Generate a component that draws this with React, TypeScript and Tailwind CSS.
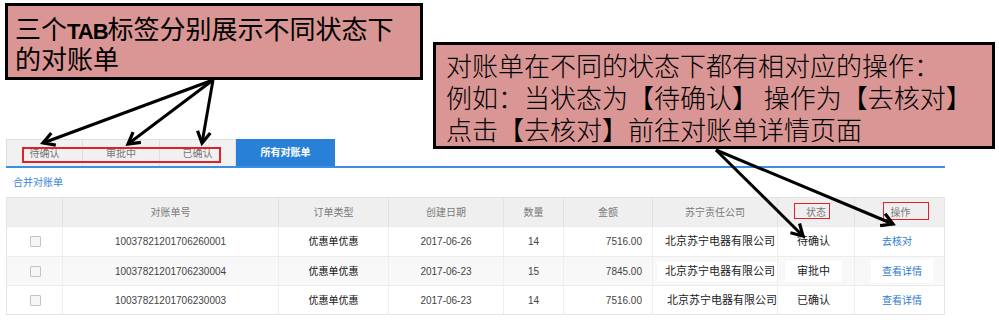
import React from "react";

const cols = "grid grid-cols-[55px_216px_110px_115px_60px_89px_125px_77px_92px]";

type Row = {
  no: string;
  date: string;
  qty: string;
  amt: string;
  status: string;
  op: string;
  shade?: boolean;
  patch?: boolean;
  companyPl: string;
};

const rows: Row[] = [
  { no: "10037821201706260001", date: "2017-06-26", qty: "14", amt: "7516.00", status: "待确认", op: "去核对", companyPl: "pl-[12px]" },
  { no: "10037821201706230004", date: "2017-06-23", qty: "15", amt: "7845.00", status: "审批中", op: "查看详情", shade: true, patch: true, companyPl: "pl-[4px]" },
  { no: "10037821201706230003", date: "2017-06-23", qty: "14", amt: "7516.00", status: "已确认", op: "查看详情", companyPl: "pl-[14px]" },
];

function Arrow({ x1, y1, x2, y2 }: { x1: number; y1: number; x2: number; y2: number }) {
  const a = Math.atan2(y2 - y1, x2 - x1);
  const L = 13;
  const w = Math.PI / 6;
  const p1 = `${x2 - L * Math.cos(a - w)},${y2 - L * Math.sin(a - w)}`;
  const p2 = `${x2 - L * Math.cos(a + w)},${y2 - L * Math.sin(a + w)}`;
  return (
    <g>
      <line x1={x1} y1={y1} x2={x2} y2={y2} stroke="#000" strokeWidth={3} />
      <polyline points={`${p1} ${x2},${y2} ${p2}`} fill="none" stroke="#000" strokeWidth={3.2} strokeLinejoin="miter" />
    </g>
  );
}

export default function App() {
  return (
    <div className="relative w-[999px] h-[324px] overflow-hidden bg-white font-[family-name:'Liberation_Sans','Noto_Sans_CJK_SC',sans-serif]">
      {/* underlying page */}
      <div className="pt-[139px] pl-[6px] w-[945px]">
        <div className="flex h-[27px]">
          <div className="w-[76px] flex items-center justify-center bg-[#f1f1f1] border-t border-l border-[#dedede] text-[10px] text-[#777]">待确认</div>
          <div className="w-[77px] flex items-center justify-center bg-[#f1f1f1] border-t border-l border-[#dedede] text-[10px] text-[#777]">审批中</div>
          <div className="w-[77px] flex items-center justify-center bg-[#f1f1f1] border-t border-l border-r border-[#dedede] text-[10px] text-[#777]">已确认</div>
          <div className="w-[99px] flex items-center justify-center bg-[#2980d7] text-[10px] font-bold text-white">所有对账单</div>
        </div>
        <div className="h-[2px] bg-[#3b8ee2]" />
        <div className="h-[29px] flex items-center pl-[7px] text-[10px] text-[#3a84d6]">合并对账单</div>
        <div className="w-[939px] border border-[#e4e4e4]">
          <div className={`${cols} h-[28px] bg-[#efefef] text-[10px] text-[#7a7a7a]`}>
            <div />
            {["对账单号", "订单类型", "创建日期", "数量", "金额", "苏宁责任公司", "状态", "操作"].map((h) => (
              <div key={h} className="flex items-center justify-center border-l border-[#e2e2e2]">{h}</div>
            ))}
          </div>
          {rows.map((r, i) => (
            <div
              key={r.no}
              className={`${cols} ${i === 0 ? "h-[30px]" : "h-[29px]"} ${r.shade ? "bg-[#f8f8f8]" : "bg-white"} border-t border-[#ececec] text-[10px] text-[#444] whitespace-nowrap`}
            >
              <div className="flex items-center justify-center pl-[1px]">
                <span className="w-[11px] h-[11px] border border-[#c4c4c4] bg-[#f6f6f6] rounded-[1px]" />
              </div>
              <div className="flex items-center justify-center border-l border-[#eeeeee]">{r.no}</div>
              <div className="flex items-center justify-center border-l border-[#eeeeee] text-[#111]">优惠单优惠</div>
              <div className="flex items-center justify-center border-l border-[#eeeeee]">{r.date}</div>
              <div className="flex items-center justify-center border-l border-[#eeeeee]">{r.qty}</div>
              <div className="flex items-center justify-end pr-[10px] border-l border-[#eeeeee]">{r.amt}</div>
              <div className={`flex items-center overflow-hidden ${r.companyPl} border-l border-[#eeeeee] text-[11px] text-[#1a1a1a]`}>
                {r.patch ? (
                  <span className="h-[19px] w-full flex items-center bg-white pl-[8px]">北京苏宁电器有限公司</span>
                ) : (
                  <span>北京苏宁电器有限公司</span>
                )}
              </div>
              <div className="flex items-center border-l border-[#eeeeee] text-[11px] text-[#1a1a1a]">
                {r.patch ? (
                  <span className="ml-[7px] h-[21px] flex items-center bg-white px-[12px]">{r.status}</span>
                ) : (
                  <span className="pl-[19px]">{r.status}</span>
                )}
              </div>
              <div className="flex items-center border-l border-[#eeeeee] text-[10px] text-[#2f7bd2]">
                {r.patch ? (
                  <span className="ml-[16px] h-[24px] flex items-center bg-white px-[11px]">{r.op}</span>
                ) : (
                  <span className="pl-[27px]">{r.op}</span>
                )}
              </div>
            </div>
          ))}
        </div>
      </div>

      {/* red highlight frames */}
      <div className="absolute left-[22px] top-[147px] w-[199px] h-[16px] border-2 border-[#e0202a]" />
      <div className="absolute left-[794px] top-[203px] w-[36px] h-[16px] border-[1.5px] border-[#e0202a]" />
      <div className="absolute left-[883px] top-[202px] w-[46px] h-[18px] border-[1.5px] border-[#e0202a]" />

      {/* arrows */}
      <svg className="absolute left-0 top-0 pointer-events-none" width={999} height={324}>
        <Arrow x1={213} y1={80} x2={43} y2={143} />
        <Arrow x1={213} y1={80} x2={128} y2={144} />
        <Arrow x1={213} y1={80} x2={202} y2={143} />
        <Arrow x1={716} y1={150} x2={803} y2={236} />
        <Arrow x1={716} y1={150} x2={893} y2={224} />
      </svg>

      {/* callouts */}
      <div className="absolute left-[5px] top-[3px] w-[418px] h-[77px] border-[3px] border-black bg-[#d99694] pl-[7px] pt-[7px] text-[26px] text-black font-[family-name:'Noto_Sans_CJK_SC',sans-serif]">
        <div className="h-[30px] leading-[30px] whitespace-nowrap">
          三个<span className="font-[family-name:'Liberation_Sans',sans-serif] font-bold text-[22px] tracking-[-1px]">TAB</span>标签分别展示不同状态下
        </div>
        <div className="h-[30px] leading-[30px]">的对账单</div>
      </div>
      <div className="absolute left-[433px] top-[42px] w-[562px] h-[107px] border-[3px] border-black bg-[#d99694] pl-[10px] pt-[4px] text-[26px] text-black whitespace-nowrap font-light font-[family-name:'Noto_Sans_CJK_SC',sans-serif]">
        <div className="h-[32px] leading-[32px]">对账单在不同的状态下都有相对应的操作：</div>
        <div className="h-[32px] leading-[32px]">例如：当状态为【待确认】 操作为【去核对】</div>
        <div className="h-[32px] leading-[32px]">点击【去核对】前往对账单详情页面</div>
      </div>
    </div>
  );
}
